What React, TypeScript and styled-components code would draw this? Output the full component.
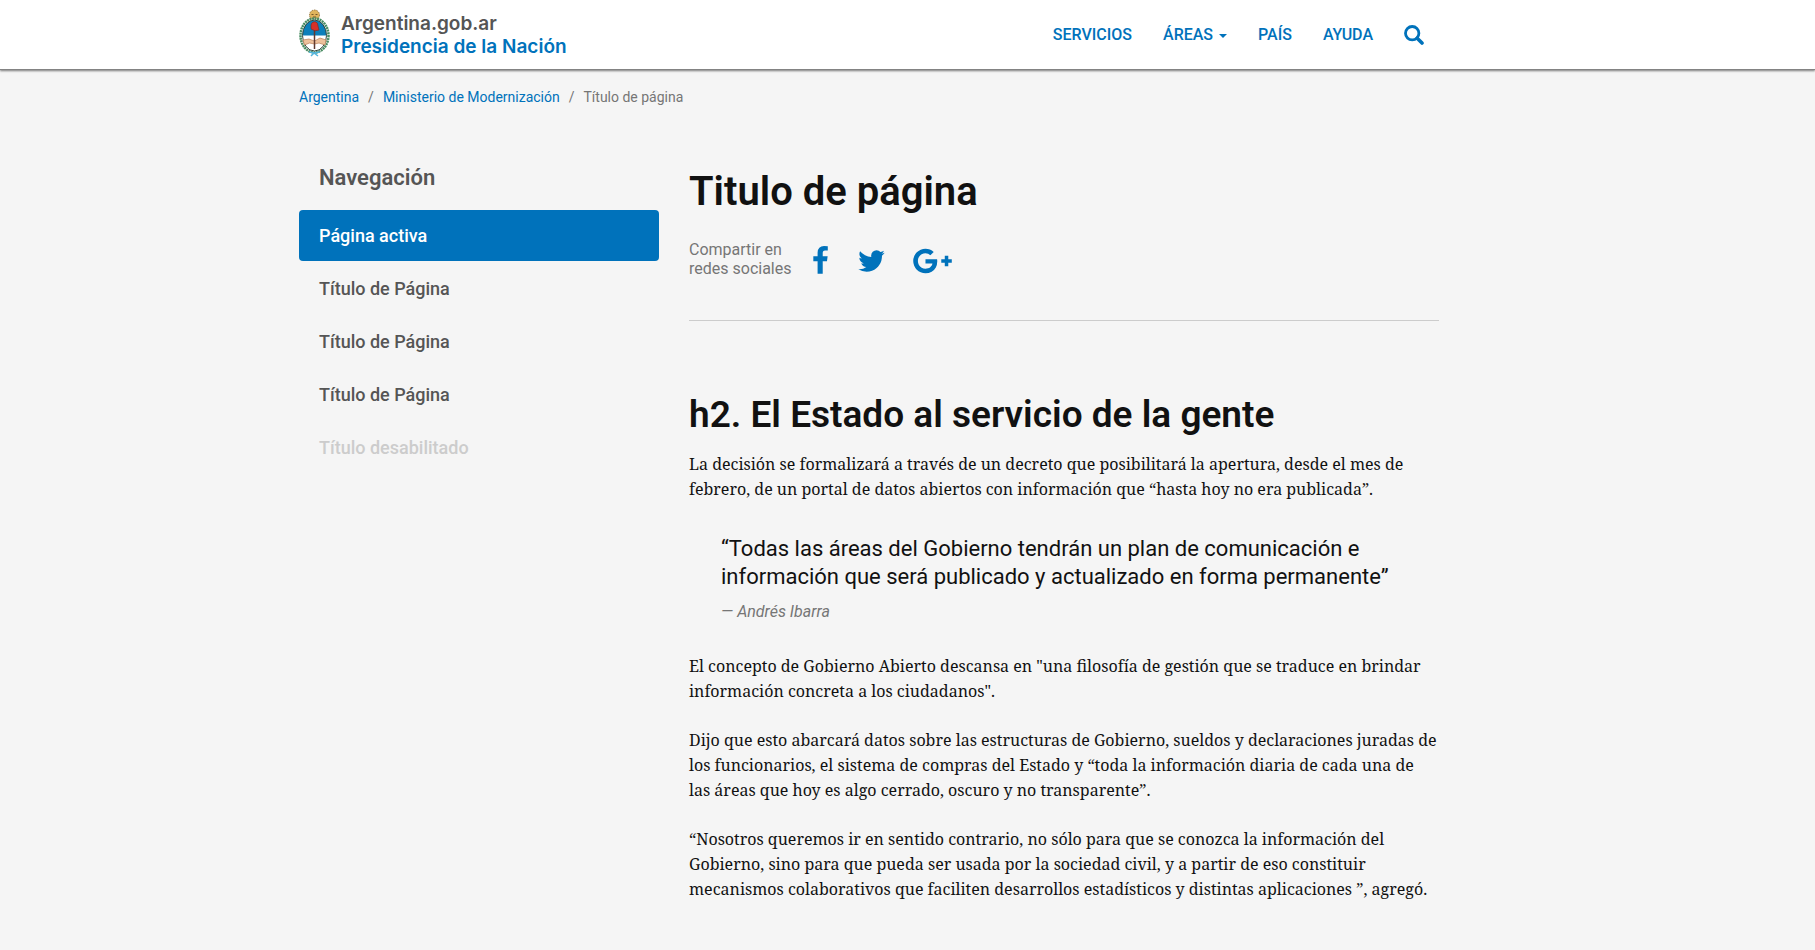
import React from "react";
import styled, { createGlobalStyle, css } from "styled-components";

const blue = "#0072bb";
const sans = `Roboto, "Liberation Sans", sans-serif`;

const GlobalStyle = createGlobalStyle`
  *, *::before, *::after { box-sizing: border-box; }
  body {
    margin: 0;
    background: #f5f5f5;
    color: #111;
    font-family: ${sans};
    font-size: 16px;
    line-height: 25px;
  }
  a { color: ${blue}; text-decoration: none; }
  h1, h2, h3, p, ul, ol, blockquote { margin: 0; padding: 0; }
  ul, ol { list-style: none; }
`;

const Shell = styled.div`
  padding-right: 77px;
  @media (max-width: 1300px) { padding-right: 0; }
`;

const Container = styled.div`
  max-width: 1170px;
  margin: 0 auto;
  padding: 0 15px;
`;

const Header = styled.header`
  background: #fff;
  border-bottom: 1px solid #838383;
  box-shadow: 0 1px 2px rgba(0, 0, 0, 0.5);
`;

const HeaderBar = styled(Container)`
  display: flex;
  justify-content: space-between;
  align-items: center;
  min-height: 69px;
`;

const Brand = styled.a`
  display: flex;
  align-items: center;
  gap: 11px;
  padding-bottom: 4px;
`;

const BrandText = styled.span`
  display: flex;
  flex-direction: column;
  padding-top: 4px;
  font: 600 19px/23px Inter, ${sans};
`;

const BrandSite = styled.span`
  color: #555;
`;

const MainNav = styled.nav`
  display: flex;
  align-items: center;
  gap: 31px;
  padding-right: 15px;
  font-size: 16px;
  font-weight: 500;
`;

const NavLink = styled.a`
  display: flex;
  align-items: center;
  gap: 6px;
`;

const Caret = styled.span`
  margin-top: 3px;
  border: 4px solid transparent;
  border-top-color: currentColor;
  border-bottom: 0;
`;

const SearchButton = styled.button`
  display: flex;
  padding: 0;
  border: 0;
  background: none;
  color: ${blue};
  cursor: pointer;
`;

const Crumbs = styled.ol`
  display: flex;
  padding: 17px 0 20px;
  font-size: 14px;
  line-height: 20px;
  color: #767676;
`;

const Crumb = styled.li`
  & + &::before {
    content: "/";
    padding: 0 9px;
  }
`;

const Columns = styled.div`
  display: grid;
  grid-template-columns: minmax(0, 360fr) minmax(0, 750fr);
  gap: 30px;
  padding-bottom: 20px;
  @media (max-width: 760px) { grid-template-columns: 1fr; }
`;

const Side = styled.nav`
  padding-top: 38px;
`;

const SideTitle = styled.h3`
  padding: 0 20px;
  margin-bottom: 19px;
  font-size: 22px;
  line-height: 26px;
  font-weight: 600;
  color: #555;
`;

const SideList = styled.ul`
  display: flex;
  flex-direction: column;
  gap: 2px;
`;

const SideLink = styled.a<{ $state?: "active" | "disabled" }>`
  display: block;
  padding: 13px 20px;
  border-radius: 4px;
  font-size: 18px;
  font-weight: 500;
  color: #555;
  ${(p) => p.$state === "active" && css`background: ${blue}; color: #fff;`}
  ${(p) => p.$state === "disabled" && css`color: #ccc; cursor: not-allowed;`}
`;

const Article = styled.main`
  padding-top: 42px;
`;

const Title = styled.h1`
  font-size: 40px;
  line-height: 45px;
  font-weight: 600;
`;

const Share = styled.div`
  display: flex;
  align-items: flex-start;
  margin: 26px 0 42px;
`;

const ShareLabel = styled.span`
  margin-right: 21px;
  font-size: 16px;
  line-height: 19px;
  color: #767676;
`;

const ShareLinks = styled.div`
  display: flex;
  align-items: center;
  gap: 28px;
  padding-top: 6px;
`;

const ShareLink = styled.a`
  display: flex;
`;

const Rule = styled.hr`
  margin: 0 0 72px;
  border: 0;
  border-top: 1px solid #ccc;
`;

const Heading = styled.h2`
  margin-bottom: 16px;
  font-size: 37px;
  line-height: 43px;
  font-weight: 600;
`;

const Paragraph = styled.p`
  margin-bottom: 24px;
  font-family: "Noto Serif", "Droid Serif", "Liberation Serif", serif;
  font-size: 16px;
  line-height: 25px;
`;

const Quote = styled.blockquote`
  margin: 33px 0 30px;
  padding: 0 32px;
  font-size: 22px;
  line-height: 28px;
`;

const Cite = styled.footer`
  margin-top: 9px;
  font-size: 16px;
  line-height: 24px;
  font-style: italic;
  color: #767676;
`;

const Emblem = () => (
  <svg width="31" height="48" viewBox="0 0 31 48" aria-hidden="true">
    <circle cx="15.500" cy="6" r="5" fill="#e0b45c" stroke="#94733c" strokeDasharray="1.500 1" />
    <path d="M12.500 5.500h2m2 0h2M14 8h3" stroke="#765628" fill="none" />
    <ellipse cx="15.500" cy="26.500" rx="14" ry="17" fill="#fff" stroke="#4a8c63" strokeWidth="2.500" strokeDasharray="2 .6" />
    <path d="M3.500 26.500C3.500 6 27.500 6 27.500 26.500Z" fill="#0c7fba" />
    <ellipse cx="15.500" cy="26.500" rx="12" ry="15.500" fill="none" stroke="#33483f" />
    <path d="M4 31l6-1 5.500 2 5.500-3 6 2-1 5-6-2-4.500 1-5-1-5 2Z" fill="#edc19c" stroke="#b98058" strokeWidth=".7" />
    <path d="M15.500 19v21" stroke="#603a30" strokeWidth="1.500" />
    <path d="M12 20v-4q1-4 5-3 2 1 2 4l1 4q-4 2-8-1Z" fill="#d73029" stroke="#7a2620" strokeWidth=".6" />
    <path d="M10 43l5 1 6-1M12 47l3-3 4 3" stroke="#54b5dc" strokeWidth="1.500" fill="none" />
  </svg>
);

const SearchIcon = () => (
  <svg width="20" height="20" viewBox="0 0 20 20" fill="none" stroke="currentColor" aria-hidden="true">
    <circle cx="8.200" cy="8.200" r="6.700" strokeWidth="2.800" />
    <path d="M13.200 13.200L18 18" strokeWidth="3.600" strokeLinecap="round" />
  </svg>
);

const FacebookIcon = () => (
  <svg width="18" height="30" viewBox="400 0 1075 1792" fill="currentColor" aria-hidden="true">
    <path d="M1343 12v264h-157q-86 0-116 36t-30 108v189h293l-39 296h-254v759h-306v-759h-255v-296h255v-218q0-186 104-288.500t277-102.500q147 0 228 12z" />
  </svg>
);

const TwitterIcon = () => (
  <svg width="27" height="30" viewBox="90 0 1613 1792" fill="currentColor" aria-hidden="true">
    <path d="M1684 408q-67 98-162 167 1 14 1 42 0 130-38 259.500t-115.500 248.500-184.500 210.500-258 146-323 54.500q-271 0-496-145 35 4 78 4 225 0 401-138-105-2-188-64.500t-114-159.500q33 5 61 5 43 0 85-11-112-23-185.500-111.500t-73.500-205.500v-4q68 38 146 41-66-44-105-115t-39-154q0-88 44-163 121 149 294.500 238.500t371.500 99.500q-8-38-8-74 0-134 94.500-228.500t228.500-94.500q140 0 236 102 109-21 205-78-37 115-142 178 93-10 186-50z" />
  </svg>
);

const GooglePlusIcon = () => (
  <svg width="39" height="30" viewBox="0 0 2304 1792" fill="currentColor" aria-hidden="true">
    <path d="M1437 913q0 208-87 370.500t-248 254-369 91.500q-149 0-285-58t-234-156-156-234-58-285 58-285 156-234 234-156 285-58q286 0 491 192l-199 191q-117-113-292-113-123 0-227.500 62t-165.500 168.500-61 232.500 61 232.500 165.500 168.500 227.500 62q83 0 152.500-23t114.500-57.500 78.500-78.500 49-83 21.500-74h-416v-252h692q12 63 12 122zm867-122v210h-209v209h-210v-209h-209v-210h209v-209h210v209h209z" />
  </svg>
);

const sideItems: { label: string; state?: "active" | "disabled" }[] = [
  { label: "Página activa", state: "active" },
  { label: "Título de Página" },
  { label: "Título de Página" },
  { label: "Título de Página" },
  { label: "Título desabilitado", state: "disabled" },
];

export default function App() {
  return (
    <>
      <GlobalStyle />
      <Header>
        <Shell>
          <HeaderBar>
            <Brand href="#">
              <Emblem />
              <BrandText>
                <BrandSite>Argentina.gob.ar</BrandSite>
                <span>Presidencia de la Nación</span>
              </BrandText>
            </Brand>
            <MainNav aria-label="Principal">
              <NavLink href="#">SERVICIOS</NavLink>
              <NavLink href="#">ÁREAS<Caret /></NavLink>
              <NavLink href="#">PAÍS</NavLink>
              <NavLink href="#">AYUDA</NavLink>
              <SearchButton type="button" aria-label="Buscar"><SearchIcon /></SearchButton>
            </MainNav>
          </HeaderBar>
        </Shell>
      </Header>
      <Shell>
        <Container>
          <Crumbs>
            <Crumb><a href="#">Argentina</a></Crumb>
            <Crumb><a href="#">Ministerio de Modernización</a></Crumb>
            <Crumb>Título de página</Crumb>
          </Crumbs>
          <Columns>
            <Side aria-label="Navegación">
              <SideTitle>Navegación</SideTitle>
              <SideList>
                {sideItems.map((item, i) => (
                  <li key={i}>
                    <SideLink href="#" $state={item.state} aria-disabled={item.state === "disabled"}>
                      {item.label}
                    </SideLink>
                  </li>
                ))}
              </SideList>
            </Side>
            <Article>
              <Title>Titulo de página</Title>
              <Share>
                <ShareLabel>Compartir en<br />redes sociales</ShareLabel>
                <ShareLinks>
                  <ShareLink href="#" aria-label="Facebook"><FacebookIcon /></ShareLink>
                  <ShareLink href="#" aria-label="Twitter"><TwitterIcon /></ShareLink>
                  <ShareLink href="#" aria-label="Google Plus"><GooglePlusIcon /></ShareLink>
                </ShareLinks>
              </Share>
              <Rule />
              <Heading>h2. El Estado al servicio de la gente</Heading>
              <Paragraph>
                La decisión se formalizará a través de un decreto que posibilitará la apertura, desde el mes de
                febrero, de un portal de datos abiertos con información que “hasta hoy no era publicada”.
              </Paragraph>
              <Quote>
                <p>
                  “Todas las áreas del Gobierno tendrán un plan de comunicación e
                  información que será publicado y actualizado en forma permanente”
                </p>
                <Cite>— Andrés Ibarra</Cite>
              </Quote>
              <Paragraph>
                El concepto de Gobierno Abierto descansa en "una filosofía de gestión que se traduce en brindar
                información concreta a los ciudadanos".
              </Paragraph>
              <Paragraph>
                Dijo que esto abarcará datos sobre las estructuras de Gobierno, sueldos y declaraciones juradas de
                los funcionarios, el sistema de compras del Estado y “toda la información diaria de cada una de
                las áreas que hoy es algo cerrado, oscuro y no transparente”.
              </Paragraph>
              <Paragraph>
                “Nosotros queremos ir en sentido contrario, no sólo para que se conozca la información del
                Gobierno, sino para que pueda ser usada por la sociedad civil, y a partir de eso constituir
                mecanismos colaborativos que faciliten desarrollos estadísticos y distintas aplicaciones ”, agregó.
              </Paragraph>
            </Article>
          </Columns>
        </Container>
      </Shell>
    </>
  );
}
